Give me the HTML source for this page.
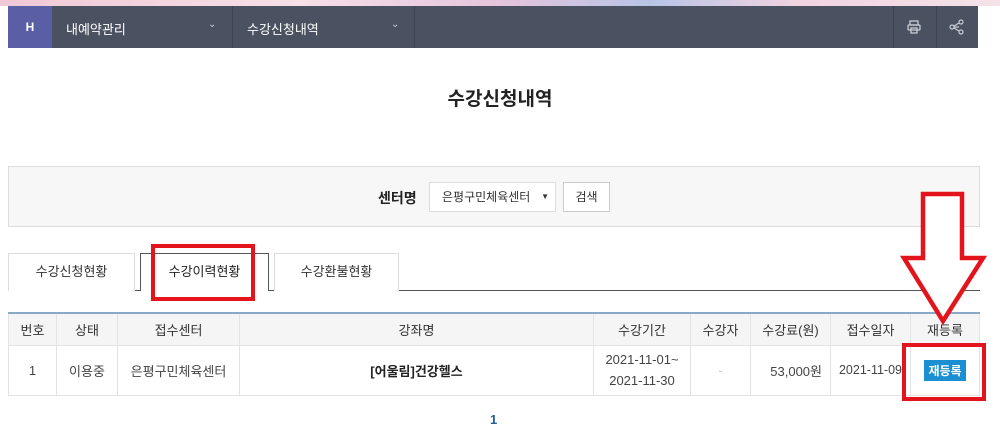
<!DOCTYPE html>
<html><head><meta charset="utf-8"><style>
*{margin:0;padding:0;box-sizing:border-box}
body{width:1000px;height:448px;overflow:hidden;background:#fff;font-family:"Liberation Sans","Noto Sans CJK KR",sans-serif;color:#333;position:relative}
.a{position:absolute}
.top{left:0;top:0;width:1000px;height:6px;background:linear-gradient(90deg,#f0c8d6,#f7e0e8 30%,#e5c4dc 50%,#b8c4e6 65%,#f2d4e0 80%,#f4e2e8)}
.nav{left:8px;top:6px;width:970px;height:42px;background:#4a5160}
.nav .d{position:absolute;top:0;height:42px;width:1px;background:#3e4452}
.t{font-size:13px;color:#fff}
table{border-collapse:collapse;position:absolute;left:8px;top:312px;width:972px;border-top:2px solid #8aa9c8;font-size:13px;color:#444}
td,th{border:1px solid #e3e3e3;text-align:center;padding:0 2px}
th{background:#f5f5f5;height:32px;font-weight:normal;color:#333}
td{height:50px}
</style></head><body>
<div class="a top"></div>
<div class="a nav">
 <div class="a" style="left:0;top:0;width:44px;height:42px;background:#5a5ea4;color:#fff;font-size:12px;font-weight:bold;text-align:center;line-height:42px">H</div>
 <div class="a t" style="left:58px;top:13px">내예약관리</div>
 <div class="a t" style="left:200px;top:13px;font-size:10px;color:#ccc">&#8964;</div>
 <div class="d" style="left:224px"></div>
 <div class="a t" style="left:239px;top:13px">수강신청내역</div>
 <div class="a t" style="left:383px;top:13px;font-size:10px;color:#ccc">&#8964;</div>
 <div class="d" style="left:406px"></div>
 <div class="d" style="left:885px"></div>
 <div class="d" style="left:928px"></div>
 <svg class="a" style="left:899px;top:14px" width="14" height="14" viewBox="0 0 14 14" fill="none" stroke="#c8ccd4" stroke-width="1.3"><rect x="3" y="1" width="8" height="4"/><rect x="1" y="5" width="12" height="5" rx="1"/><rect x="4" y="8" width="6" height="5"/></svg>
 <svg class="a" style="left:941px;top:13px" width="16" height="16" viewBox="0 0 16 16" fill="none" stroke="#c8ccd4" stroke-width="1.2"><circle cx="3" cy="8" r="2"/><circle cx="12" cy="3" r="2"/><circle cx="12" cy="13" r="2"/><path d="M5 8h5M5 7l5-3M5 9l5 3"/></svg>
</div>
<div class="a" style="left:0;width:1000px;top:84px;text-align:center;font-size:19px;font-weight:bold;color:#222">수강신청내역</div>
<div class="a" style="left:8px;top:166px;width:972px;height:61px;background:#f7f7f7;border:1px solid #ddd"></div>
<div class="a" style="left:378px;top:188px;font-size:14px;font-weight:bold;color:#222">센터명</div>
<div class="a" style="left:429px;top:182px;width:127px;height:30px;background:#fff;border:1px solid #ddd;font-size:12px;line-height:28px;padding-left:12px">은평구민체육센터<span style="position:absolute;right:6px;font-size:8px">▼</span></div>
<div class="a" style="left:563px;top:182px;width:47px;height:30px;background:#fff;border:1px solid #ccc;font-size:12px;line-height:28px;text-align:center">검색</div>
<div class="a" style="left:8px;top:290px;width:972px;height:1px;background:#555"></div>
<div class="a" style="left:8px;top:253px;width:127px;height:38px;border:1px solid #ddd;border-bottom:none;background:#fff;font-size:13px;text-align:center;line-height:36px">수강신청현황</div>
<div class="a" style="left:140px;top:253px;width:129px;height:38px;border:1px solid #555;border-bottom:none;background:#fff;font-size:13px;text-align:center;line-height:36px;color:#222">수강이력현황</div>
<div class="a" style="left:274px;top:253px;width:125px;height:38px;border:1px solid #ddd;border-bottom:none;background:#fff;font-size:13px;text-align:center;line-height:36px">수강환불현황</div>
<div class="a" style="left:151px;top:244px;width:104px;height:57px;border:4px solid #e3141c"></div>
<table>
<tr><th style="width:48px">번호</th><th style="width:61px">상태</th><th style="width:122px">접수센터</th><th style="width:354px">강좌명</th><th style="width:97px">수강기간</th><th style="width:60px">수강자</th><th style="width:80px">수강료(원)</th><th style="width:80px">접수일자</th><th>재등록</th></tr>
<tr><td>1</td><td>이용중</td><td>은평구민체육센터</td><td style="font-weight:bold;color:#222">[어울림]건강헬스</td><td style="line-height:21px">2021-11-01~<br>2021-11-30</td><td style="color:#ccc">-</td><td style="text-align:right;padding-right:8px">53,000원</td><td style="font-size:12.5px">2021-11-09</td><td><span style="display:inline-block;background:#1b8fd2;color:#fff;font-size:12px;font-weight:bold;padding:2px 4px">재등록</span></td></tr>
</table>
<div class="a" style="left:902px;top:343px;width:84px;height:58px;border:4px solid #e3141c"></div>
<svg class="a" style="left:900px;top:190px" width="90" height="135" viewBox="0 0 90 135"><path d="M23 4H62V68H83L43 131L4 68H23Z" fill="#fff" stroke="#e3141c" stroke-width="4.5" stroke-linejoin="miter"/></svg>
<div class="a" style="left:490px;top:412px;font-size:13px;font-weight:bold;color:#2a5a9a">1</div>
</body></html>
